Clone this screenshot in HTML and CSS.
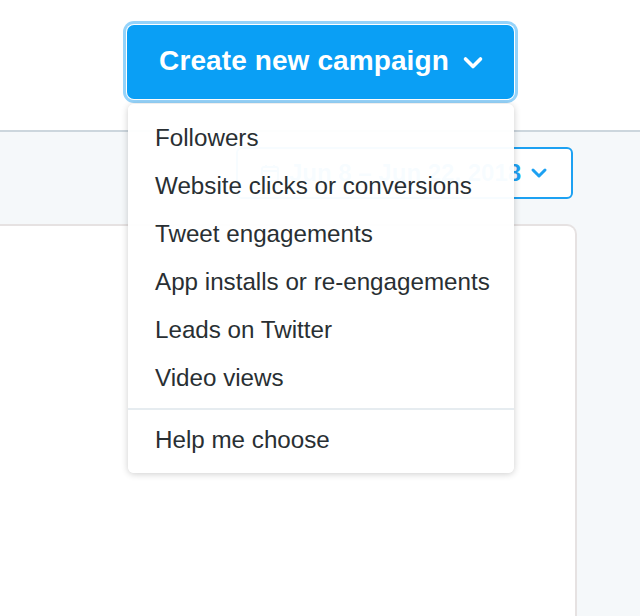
FILE: index.html
```html
<!DOCTYPE html>
<html>
<head>
<meta charset="utf-8">
<link rel="stylesheet" href="styles.css">
</head>
<body>
<header class="topbar">
  <div class="create-wrap">
    <button class="create-btn">
      <span>Create new campaign</span>
      <svg class="chev" width="22" height="22" viewBox="0 0 22 22"><path d="M3.5 7 L11 14.5 L18.5 7" fill="none" stroke="#fff" stroke-width="3.6" stroke-linecap="round" stroke-linejoin="round"/></svg>
    </button>
    <div class="menu">
      <div class="item">Followers</div>
      <div class="item">Website clicks or conversions</div>
      <div class="item">Tweet engagements</div>
      <div class="item">App installs or re-engagements</div>
      <div class="item">Leads on Twitter</div>
      <div class="item">Video views</div>
      <div class="sep"></div>
      <div class="item">Help me choose</div>
    </div>
  </div>
</header>
<main class="content">
  <div class="toolbar">
    <button class="date-btn">
      <svg class="cal" width="20" height="20" viewBox="0 0 20 20"><rect x="2" y="4" width="16" height="14" rx="2" fill="none" stroke="#1da1f2" stroke-width="2"/><path d="M2 8 H18 M6 2 V5 M14 2 V5" stroke="#1da1f2" stroke-width="2" fill="none"/></svg>
      <span>Jun 8 – Jun 22, 2018</span>
      <svg class="dchev" width="18" height="18" viewBox="0 0 18 18"><path d="M3 6 L9 12 L15 6" fill="none" stroke="#1da1f2" stroke-width="3" stroke-linecap="round" stroke-linejoin="round"/></svg>
    </button>
  </div>
  <section class="card"></section>
</main>
</body>
</html>
```

FILE: styles.css
```css
* { box-sizing: border-box; }
html, body { margin: 0; padding: 0; height: 100%; }
body {
  font-family: "Liberation Sans", Arial, Helvetica, sans-serif;
  background: #f5f8fa;
  overflow: hidden;
}
.topbar {
  height: 132px;
  background: #fff;
  border-bottom: 2px solid #ccd6dd;
  display: flex;
  justify-content: center;
  padding-top: 25px;
  position: relative;
  z-index: 5;
}
.create-wrap {
  position: relative;
  width: 387px;
  margin-left: 1px;
  height: 74px;
}
.create-btn {
  width: 387px;
  height: 74px;
  border: none;
  border-radius: 7px;
  background: #0a9ff5;
  color: #fff;
  font-family: inherit;
  font-weight: bold;
  font-size: 28px;
  letter-spacing: 0.1px;
  display: flex;
  align-items: center;
  justify-content: center;
  gap: 13px;
  padding: 0 0 2px 2px;
  box-shadow: 0 0 0 1px #fff, 0 0 0 4px #95d3fa;
}
.chev { margin-top: 3px; }
.menu {
  position: absolute;
  left: 1px;
  top: 79px;
  width: 386px;
  background: rgba(255,255,255,0.965);
  border-radius: 6px;
  box-shadow: 0 1px 7px rgba(0,0,0,0.2);
  padding: 10px 0 9px;
}
.item {
  height: 48px;
  display: flex;
  align-items: center;
  padding-left: 27px;
  font-size: 24.2px;
  color: #292f33;
}
.sep {
  height: 2px;
  background: #e6ecf0;
  margin: 6px 0 6px;
}
.content {
  width: 577px;
  padding-top: 15px;
}
.toolbar {
  display: flex;
  justify-content: flex-end;
  padding-right: 4px;
}
.date-btn {
  width: 337px;
  height: 52px;
  border: 2px solid #1da1f2;
  border-radius: 6px;
  background: #fff;
  color: #1da1f2;
  font-family: inherit;
  font-weight: bold;
  font-size: 24px;
  display: flex;
  align-items: center;
  padding: 0 0 0 22px;
  gap: 9px;
}
.card {
  margin-top: 25px;
  height: 400px;
  background: #fff;
  border: 2px solid #e6e2e2;
  border-left: none;
  border-top-right-radius: 10px;
}
```
